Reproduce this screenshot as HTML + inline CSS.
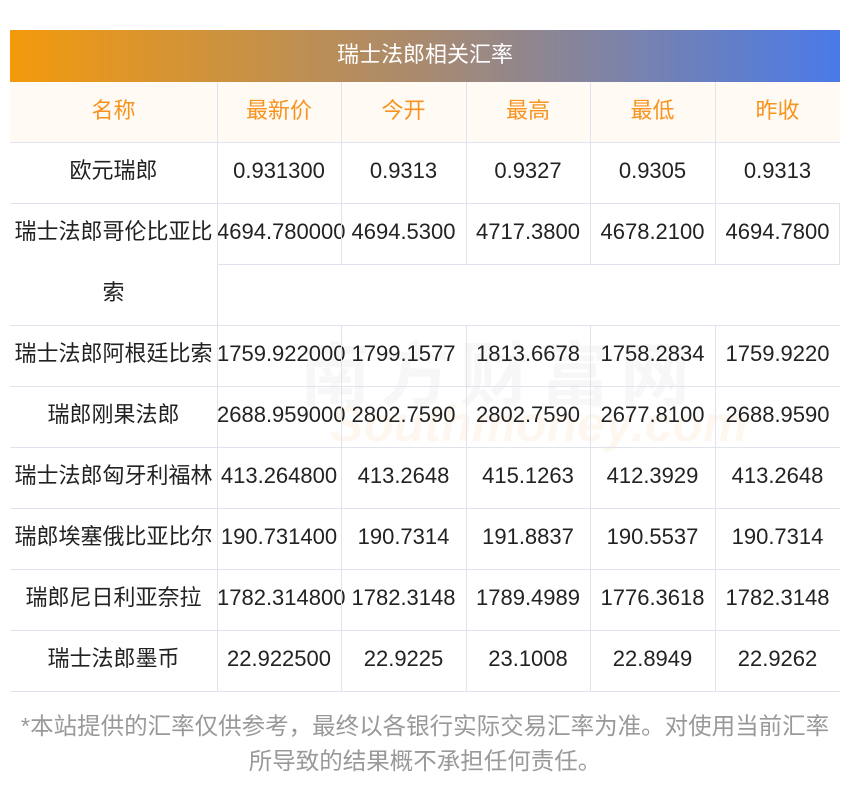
<!DOCTYPE html>
<html><head><meta charset="utf-8"><style>
*{margin:0;padding:0;box-sizing:border-box}
body{width:850px;height:793px;background:#fff;font-family:"Liberation Sans","Noto Sans CJK SC",sans-serif;position:relative;overflow:hidden}
.title{position:absolute;left:10px;top:30px;width:830px;height:52px;background:linear-gradient(90deg,#f39a0c,#a88a70 50%,#4a7ae8);color:#fff;font-size:22px;text-align:center;line-height:50px}
.hd{position:absolute;left:10px;top:82px;width:830px;height:60px;background:#fffaf3}
.c{position:absolute;text-align:center;font-size:22px;color:#222;line-height:57px;white-space:nowrap}
.o{color:#f7931e}
.h{position:absolute;height:1px;background:#e0e3ee}
.v{position:absolute;width:1px;background:#e0e3ee}
.foot{position:absolute;left:0;width:850px;text-align:center;font-size:23.5px;color:#999;line-height:35px;white-space:nowrap}
</style></head><body>
<div class="title">瑞士法郎相关汇率</div>
<div class="hd"></div>
<div style="position:absolute;left:300px;top:320px;font-size:70px;color:rgba(150,150,150,0.08);font-weight:bold;letter-spacing:10px">南方财富网</div>
<div style="position:absolute;left:330px;top:395px;font-size:50px;font-style:italic;color:rgba(240,150,60,0.08);font-weight:bold">Southmoney.com</div>
<div id="t"></div>
<div class="foot" style="top:709px">*本站提供的汇率仅供参考，最终以各银行实际交易汇率为准。对使用当前汇率</div>
<div class="foot" style="top:744px">所导致的结果概不承担任何责任。</div>
<script>
var xs=[10,217,341,466,590,715,840];
var rows=[
["名称","最新价","今开","最高","最低","昨收"],
["欧元瑞郎","0.931300","0.9313","0.9327","0.9305","0.9313"],
["瑞士法郎哥伦比亚比","4694.780000","4694.5300","4717.3800","4678.2100","4694.7800"],
["瑞士法郎阿根廷比索","1759.922000","1799.1577","1813.6678","1758.2834","1759.9220"],
["瑞郎刚果法郎","2688.959000","2802.7590","2802.7590","2677.8100","2688.9590"],
["瑞士法郎匈牙利福林","413.264800","413.2648","415.1263","412.3929","413.2648"],
["瑞郎埃塞俄比亚比尔","190.731400","190.7314","191.8837","190.5537","190.7314"],
["瑞郎尼日利亚奈拉","1782.314800","1782.3148","1789.4989","1776.3618","1782.3148"],
["瑞士法郎墨币","22.922500","22.9225","23.1008","22.8949","22.9262"]];
var tops=[82,142,203,325,386,447,508,569,630];
var h='';
rows.forEach(function(r,i){var t=tops[i];
 r.forEach(function(s,j){h+='<div class="c'+(i==0?' o':'')+'" style="left:'+xs[j]+'px;width:'+(xs[j+1]-xs[j])+'px;top:'+t+'px">'+s+'</div>';});
 h+='<div class="h" style="left:10px;width:830px;top:'+(i==0?142:(i==2?325:tops[i]+61))+'px"></div>';
 for(var j=1;j<6;j++){var hh=(i==2&&j>1)?61:(i==2?122:61);if(i==0)hh=60;h+='<div class="v" style="left:'+xs[j]+'px;top:'+t+'px;height:'+hh+'px"></div>';}
});
h+='<div class="c" style="left:10px;width:207px;top:264px">索</div>';
h+='<div class="h" style="left:217px;width:623px;top:264px"></div>';
h+='<div class="v" style="left:839px;top:203px;height:61px;"></div>';
document.getElementById('t').innerHTML=h;
</script>
</body></html>
